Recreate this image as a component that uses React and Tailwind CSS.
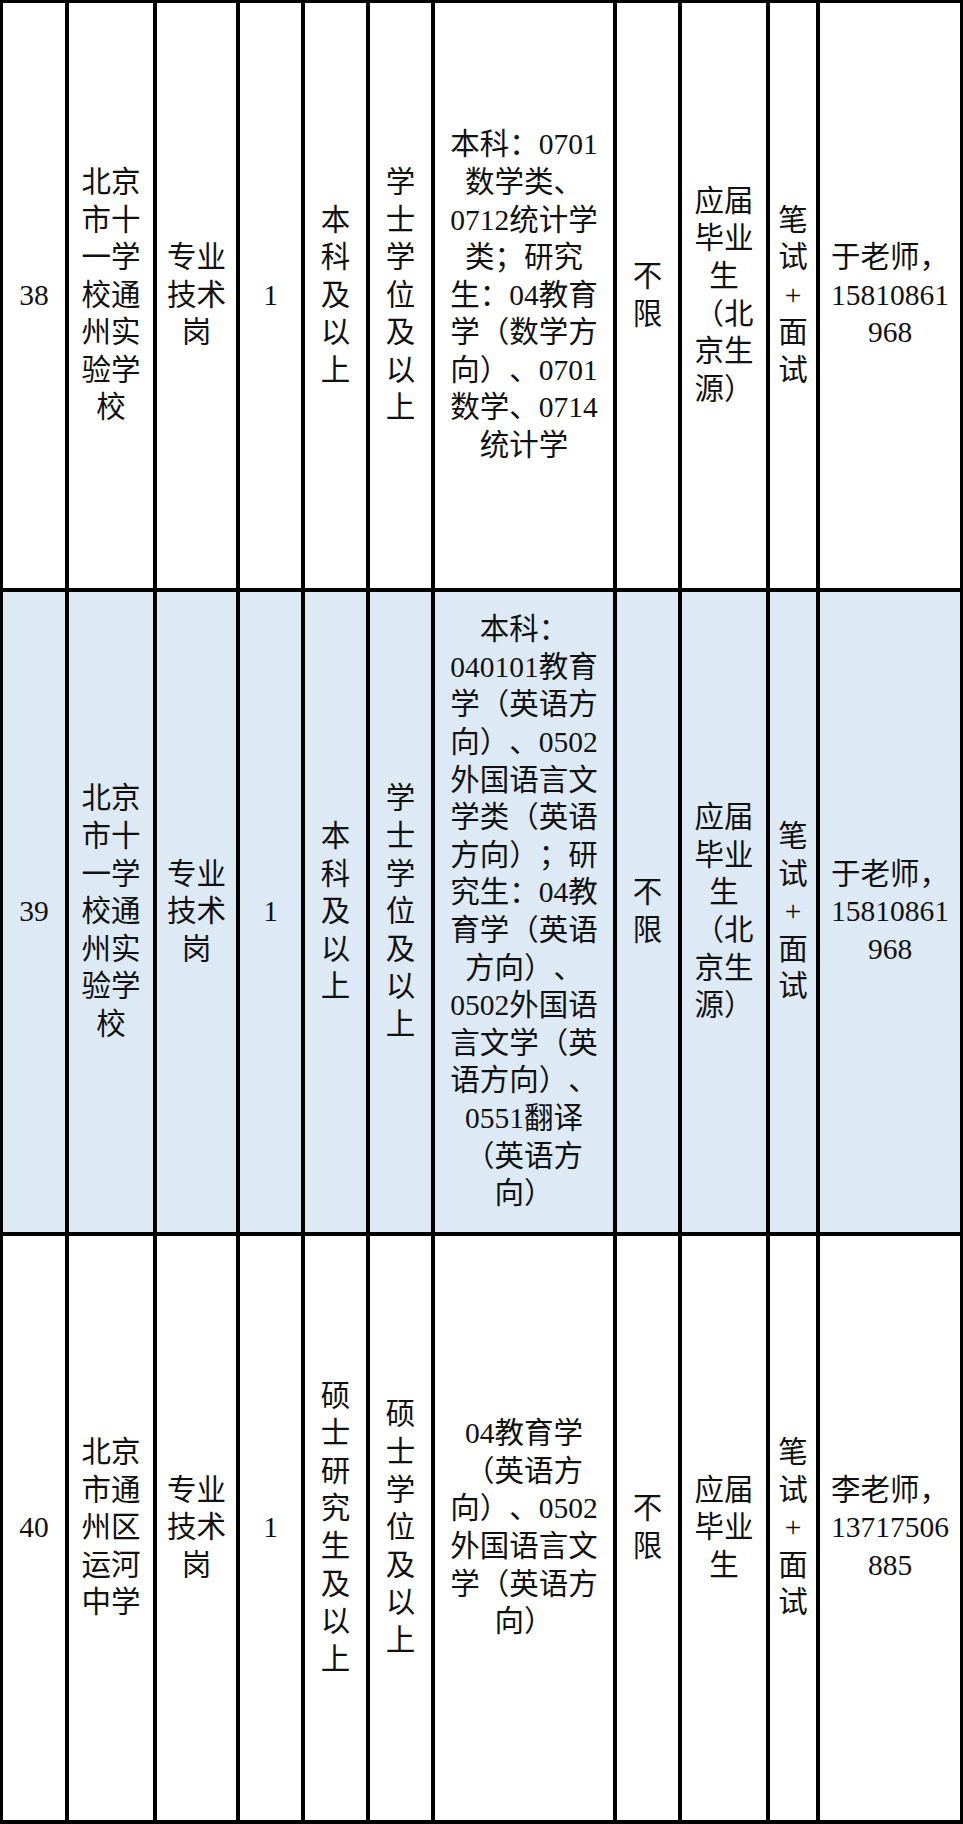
const rows = [
  {
    bg: "bg-white",
    cells: [
      ["38"],
      ["北京", "市十", "一学", "校通", "州实", "验学", "校"],
      ["专业", "技术", "岗"],
      ["1"],
      ["本", "科", "及", "以", "上"],
      ["学", "士", "学", "位", "及", "以", "上"],
      [
        "本科：0701",
        "数学类、",
        "0712统计学",
        "类；研究",
        "生：04教育",
        "学（数学方",
        "向）、0701",
        "数学、0714",
        "统计学",
      ],
      ["不", "限"],
      ["应届", "毕业", "生", "（北", "京生", "源）"],
      ["笔", "试", "+", "面", "试"],
      ["于老师，", "15810861", "968"],
    ],
  },
  {
    bg: "bg-[#dde9f5]",
    cells: [
      ["39"],
      ["北京", "市十", "一学", "校通", "州实", "验学", "校"],
      ["专业", "技术", "岗"],
      ["1"],
      ["本", "科", "及", "以", "上"],
      ["学", "士", "学", "位", "及", "以", "上"],
      [
        "本科：",
        "040101教育",
        "学（英语方",
        "向）、0502",
        "外国语言文",
        "学类（英语",
        "方向）；研",
        "究生：04教",
        "育学（英语",
        "方向）、",
        "0502外国语",
        "言文学（英",
        "语方向）、",
        "0551翻译",
        "（英语方",
        "向）",
      ],
      ["不", "限"],
      ["应届", "毕业", "生", "（北", "京生", "源）"],
      ["笔", "试", "+", "面", "试"],
      ["于老师，", "15810861", "968"],
    ],
  },
  {
    bg: "bg-white",
    cells: [
      ["40"],
      ["北京", "市通", "州区", "运河", "中学"],
      ["专业", "技术", "岗"],
      ["1"],
      ["硕", "士", "研", "究", "生", "及", "以", "上"],
      ["硕", "士", "学", "位", "及", "以", "上"],
      [
        "04教育学",
        "（英语方",
        "向）、0502",
        "外国语言文",
        "学（英语方",
        "向）",
      ],
      ["不", "限"],
      ["应届", "毕业", "生"],
      ["笔", "试", "+", "面", "试"],
      ["李老师，", "13717506", "885"],
    ],
  },
];

// one table cell, each line written out as the sheet wraps it
const Cell = ({ lines, bg }) => (
  <div className={`${bg} flex flex-col items-center justify-center text-center`}>
    {lines.map((line, i) => (
      <div key={i} className="whitespace-nowrap">
        {line}
      </div>
    ))}
  </div>
);

const App = () => {
  return (
    <div className="w-[963px] h-[1824px] bg-white">
      <div className="grid grid-cols-[62px_84px_79px_61px_61px_61px_178px_61px_84px_46px_140px] grid-rows-[585px_640px_584px] gap-[4px] bg-black pt-[3px] pl-[3px] pr-[3px] pb-[4px] text-[29.5px] leading-[37.6px] text-[#111] font-['Liberation_Serif','Noto_Sans_CJK_SC',serif] [text-spacing-trim:space-all]">
        {rows.map((row, r) =>
          row.cells.map((lines, c) => (
            <Cell key={`${r}-${c}`} lines={lines} bg={row.bg} />
          ))
        )}
      </div>
    </div>
  );
};

export default App;
